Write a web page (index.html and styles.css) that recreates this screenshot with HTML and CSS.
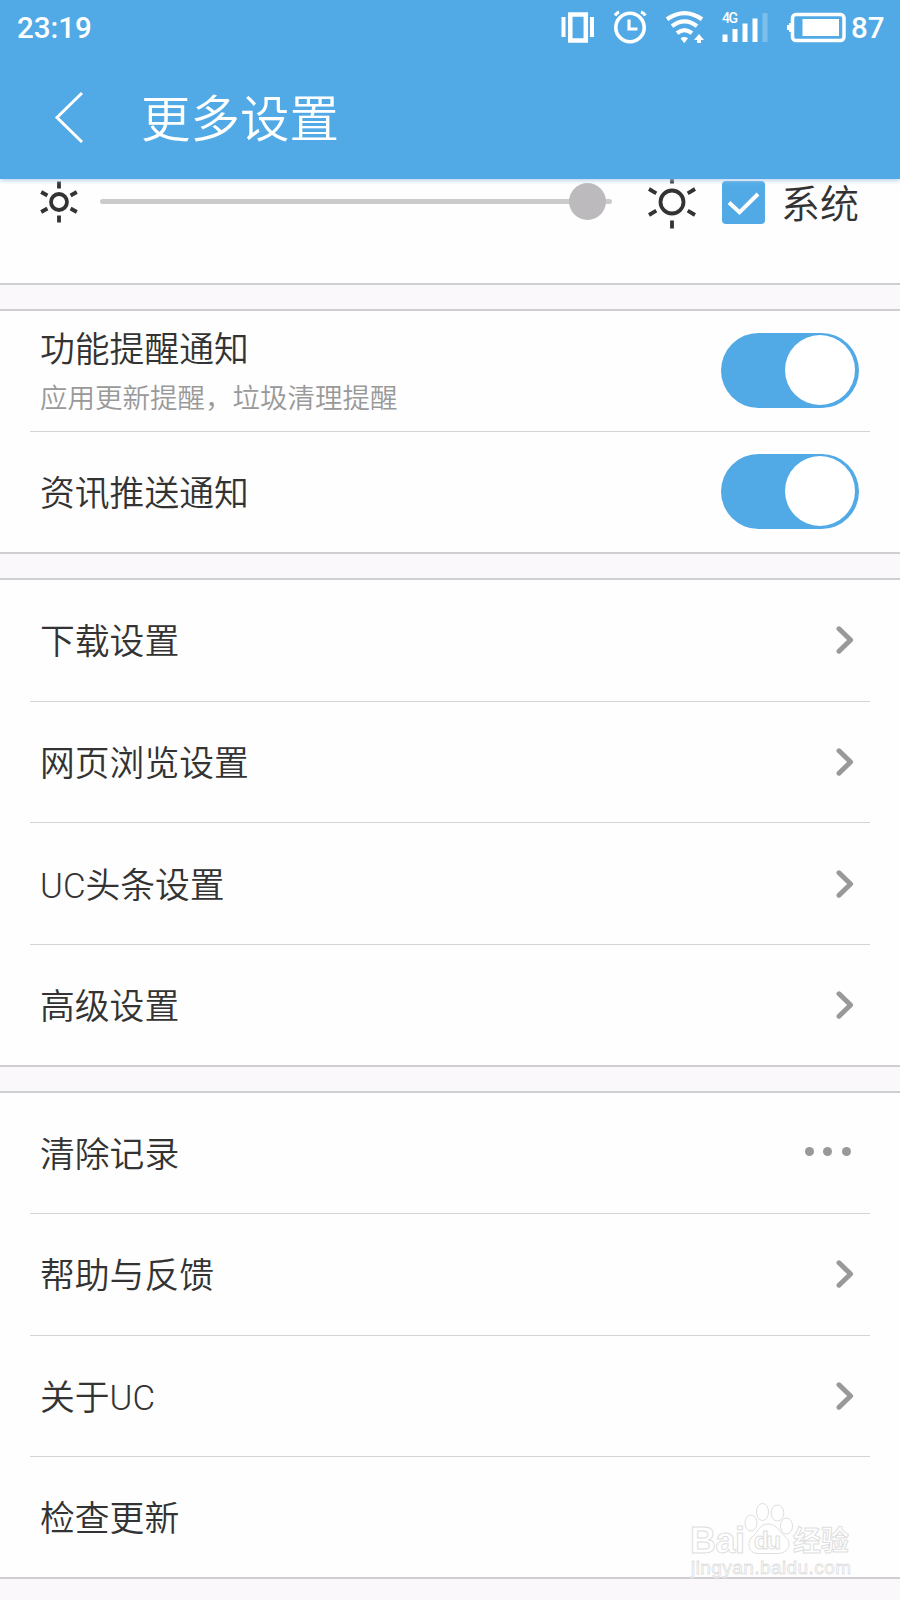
FILE: index.html
```html
<!DOCTYPE html>
<html lang="zh-CN">
  <head>
    <meta charset="UTF-8">
    <title>更多设置</title>
    <link rel="stylesheet" href="styles.css">
  </head>

  <body>
  <svg class="defs" width="0" height="0">
    <symbol id="arrow" viewBox="0 0 18 30"><path d="M3 3.8L14.6 15L3 26.2"/></symbol>
  </svg>

  <div id="header">
    <div class="status">
      <span>23:19</span>
      <svg width="322" height="54" viewBox="540 0 322 54">
        <!-- vibrate -->
        <path class="fill" d="M561.5 17h4v20h-4zM590 17h4v20h-4z"/>
        <path class="line" stroke-width="4.5" d="M570.3 14.5h15.500v26h-15.500z"/>
        <!-- alarm -->
        <circle class="line" stroke-width="3.6" cx="630" cy="27.5" r="14.2"/>
        <path class="line" stroke-width="3.2" d="M629 19.5v9.5h8.5M615 15.5q1.5-2.5 4-3.5M641 12q3 1 4.300 3.500"/>
        <!-- wifi -->
        <path class="line" stroke-width="4.200" d="M667 19.300Q684.500 7 702 19.300M672 26.200Q684.500 16.500 697 26.200M677 33.200Q684.500 27 692 33.200"/>
        <path class="fill" d="M680.500 38.200q4-2.600 7.500 0l-3.700 5zM699 34l5 6h-3v3h-4v-3h-3z"/>
        <!-- signal -->
        <text class="net" x="722" y="23" textLength="16">4G</text>
        <path class="fill" d="M722.500 34.500h5V42h-5zM732.500 29h5v13h-5zM742.500 23.500h5V42h-5zM752.500 18.500h5V42h-5z"/>
        <path class="fill dim" d="M762.500 13h5v29h-5z"/>
        <!-- battery -->
        <rect class="line" stroke-width="3.500" x="792.500" y="14.500" width="51.500" height="26" rx="3.500"/>
        <path class="fill" d="M802.500 19h36.500v17h-36.500zM791 23h-2v2h-2v5h2v2h2z"/>
      </svg>
      <span class="level">87</span>
    </div>
    <div class="title">
      <svg width="30" height="52" viewBox="0 0 30 52"><path d="M28 2L3 26.500L28 51"/></svg>
      <h1>更多设置</h1>
    </div>
  </div>

  <div class="light">
    <svg class="sun" width="42" height="46" viewBox="-21 -23 42 46">
      <circle r="8"/>
      <path d="M0-20.500v7M0 13.500v7M-17.800-10l6.200 3.500M17.800-10l-6.200 3.500M-17.800 10l6.200-3.500M17.800 10l-6.200-3.500"/>
    </svg>
    <div class="slider"><i></i></div>
    <svg class="sun big" width="54" height="54" viewBox="-27 -27 54 54">
      <circle r="11.500"/>
      <path d="M0-26.500v8M0 18.500v8M-23-13l7.300 4.300M23-13l-7.300 4.300M-23 13l7.300-4.300M23 13l-7.300-4.300"/>
    </svg>
    <svg class="check" width="43" height="43" viewBox="0 0 43 43"><path d="M7 21.500L17.500 31.300L36 13"/></svg>
    <span>系统</span>
  </div>

  <div class="group">
    <div class="row two">
      <div><p>功能提醒通知</p><p class="sub">应用更新提醒，垃圾清理提醒</p></div>
      <div class="switch"><i></i></div>
    </div>
    <div class="row"><p>资讯推送通知</p><div class="switch"><i></i></div></div>
  </div>

  <div class="group">
    <div class="row"><p>下载设置</p><svg class="arrow"><use href="#arrow"/></svg></div>
    <div class="row"><p>网页浏览设置</p><svg class="arrow"><use href="#arrow"/></svg></div>
    <div class="row"><p>UC头条设置</p><svg class="arrow"><use href="#arrow"/></svg></div>
    <div class="row"><p>高级设置</p><svg class="arrow"><use href="#arrow"/></svg></div>
  </div>

  <div class="group">
    <div class="row"><p>清除记录</p><div class="dots"><i></i><i></i><i></i></div></div>
    <div class="row"><p>帮助与反馈</p><svg class="arrow"><use href="#arrow"/></svg></div>
    <div class="row"><p>关于UC</p><svg class="arrow"><use href="#arrow"/></svg></div>
    <div class="row"><p>检查更新</p></div>
  </div>

  <svg class="mark" width="180" height="90" viewBox="680 1495 180 90">
    <text class="bai" x="690" y="1552.500" textLength="55">Bai</text>
    <ellipse cx="751" cy="1523" rx="6" ry="8"/>
    <ellipse cx="762.500" cy="1512" rx="6" ry="8.500"/>
    <ellipse cx="777.500" cy="1513" rx="6.300" ry="8"/>
    <ellipse cx="786.500" cy="1526" rx="6" ry="8"/>
    <path d="M768 1524c-8 0-10 8-15 12c-6 5-6 17 5 17.500h20c11-.5 14-10 8-16c-6-5-9-13.500-18-13.500z"/>
    <text class="du" x="754" y="1549" textLength="27">du</text>
    <text class="yan" x="793" y="1551" textLength="56">经验</text>
    <text class="url" x="691" y="1573.500" textLength="160">jingyan.baidu.com</text>
  </svg>
  </body>
</html>
```
FILE: styles.css
```css
body{margin:0;height:1600px;position:relative;overflow:hidden;background:#faf8fb;color:#333;font-family:Roboto,"Noto Sans CJK SC",sans-serif;font-weight:350;}
p,h1{margin:0;font-weight:350;}
svg{display:block;flex:none;}
.defs{position:absolute;}

#header{position:relative;height:179px;background:#51aae5;color:white;box-shadow:0 1px 5px #a9c9ea;}
.status{display:flex;height:54px;align-items:center;padding:0 17px 0 17px;font-size:29.500px;font-weight:500;}
.status span{padding-top:1px;}
.status svg{margin-left:auto;margin-right:-11px;}
.status .fill,.net{fill:white;}
.status .dim{opacity:.25;}
.status .line{fill:none;stroke:white;}
.net{font-size:14px;font-weight:500;}
.level{width:32px;}
.title{display:flex;height:125px;align-items:center;padding-left:54px;}
.title path{fill:none;stroke:white;stroke-width:3;}
.title h1{margin-left:57px;padding-top:6px;font-size:49.500px;line-height:70px;}

.light{display:flex;height:46px;align-items:center;padding:0 40px 58px 38px;background:#fefefe;border-bottom:2px solid #cfced1;}
.sun{fill:none;stroke:#333;stroke-width:3.8;}
.slider{width:512px;height:5px;margin:-1px 0 0 20px;border-radius:3px;background:#cbcbcb;}
.slider i{display:block;width:37px;height:37px;margin:-16px 0 0 469px;border-radius:50%;background:#bcbabd;}
.big{margin-left:33px;}
.check{margin-left:23px;border-radius:4px;background:#51aae5;}
.check path{fill:none;stroke:white;stroke-width:4;}
.light span{margin-left:16px;padding-top:5px;font-size:39px;line-height:46px;white-space:nowrap;}

.group{margin-top:23.800px;border-top:2px solid #cfced1;border-bottom:2px solid #cfced1;background:#fefefe;}
.row{display:flex;box-sizing:border-box;height:121.600px;margin:0 30px;padding:0 11px 0 10px;align-items:center;justify-content:space-between;border-bottom:1px solid #d3d3d5;font-size:34.800px;line-height:50px;}
.row:last-child{height:119.900px;border:0;}
.row p{padding-top:4px;}
.two p{padding-top:6px;}
.row .sub{padding:0;font-size:27.500px;line-height:48px;color:#999;}
.switch{width:138px;height:75px;margin-top:-2px;border-radius:38px;background:#51aae5;}
.switch i{display:block;width:70px;height:70px;margin:2.500px 0 0 64px;border-radius:50%;background:white;}
.arrow{width:18px;height:30px;margin-right:5px;fill:none;stroke:#999;stroke-width:5;stroke-linecap:round;stroke-linejoin:round;}
.dots{display:flex;gap:9.500px;margin:-2px 8.500px 0 0;}
.dots i{width:9px;height:9px;border-radius:50%;background:#999;}

.mark{position:absolute;left:680px;top:1495px;fill:white;stroke:#dedede;stroke-width:1;font-family:"Liberation Sans","Noto Sans CJK SC",sans-serif;}
.mark .bai{font-size:36px;font-weight:bold;}
.mark .du{font-size:24px;font-weight:bold;}
.mark .yan{font-size:28px;font-weight:bold;}
.mark .url{font-size:19px;stroke-width:.8;}
```
